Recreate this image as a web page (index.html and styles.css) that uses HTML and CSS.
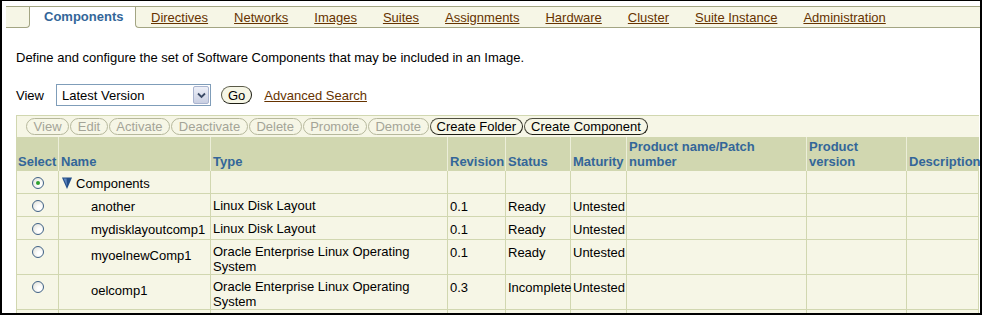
FILE: index.html
```html
<!DOCTYPE html>
<html>
<head>
<meta charset="utf-8">
<title>Components</title>
<link rel="stylesheet" href="styles.css">
</head>
<body>
<div class="frame">
  <div class="tabs">
    <div class="tab-lead"></div>
    <div class="tab-active">Components</div>
    <div class="tab-rest">
      <a class="link">Directives</a>
      <a class="link">Networks</a>
      <a class="link">Images</a>
      <a class="link">Suites</a>
      <a class="link">Assignments</a>
      <a class="link">Hardware</a>
      <a class="link">Cluster</a>
      <a class="link">Suite Instance</a>
      <a class="link">Administration</a>
    </div>
  </div>

  <div class="content">
    <p class="desc">Define and configure the set of Software Components that may be included in an Image.</p>

    <div class="view-row">
      <span class="view-label">View</span>
      <div class="select">
        <span class="select-text">Latest Version</span>
        <span class="select-btn">
          <svg width="9" height="7" viewBox="0 0 9 7"><polyline points="1,1.5 4.5,5 8,1.5" fill="none" stroke="#3b4a66" stroke-width="1.8"/></svg>
        </span>
      </div>
      <span class="btn go">Go</span>
      <a class="link adv">Advanced Search</a>
    </div>

    <div class="toolbar">
      <span class="btn tb off">View</span>
      <span class="btn tb off">Edit</span>
      <span class="btn tb off">Activate</span>
      <span class="btn tb off">Deactivate</span>
      <span class="btn tb off">Delete</span>
      <span class="btn tb off">Promote</span>
      <span class="btn tb off">Demote</span>
      <span class="btn tb">Create Folder</span>
      <span class="btn tb">Create Component</span>
    </div>

    <table class="grid">
      <colgroup>
        <col class="c-select"><col class="c-name"><col class="c-type"><col class="c-rev"><col class="c-status"><col class="c-mat"><col class="c-prod"><col class="c-pver"><col class="c-desc">
      </colgroup>
      <thead>
        <tr>
          <th class="th-select">Select</th>
          <th>Name</th>
          <th>Type</th>
          <th>Revision</th>
          <th>Status</th>
          <th>Maturity</th>
          <th>Product name/Patch number</th>
          <th>Product version</th>
          <th class="last">Description</th>
        </tr>
      </thead>
      <tbody>
        <tr>
          <td><span class="radio on"></span></td>
          <td class="tree"><svg class="tri" width="10" height="12" viewBox="0 0 10 12"><polygon points="0,0.5 10,0.5 5,12" fill="#244f8a"/><polygon points="1.5,1.5 4.5,1.5 5,9" fill="#5f86bf"/></svg>Components</td>
          <td class="type"></td><td></td><td></td><td></td><td></td><td></td><td class="last"></td>
        </tr>
        <tr>
          <td><span class="radio"></span></td>
          <td class="indent">another</td>
          <td class="type">Linux Disk Layout</td>
          <td>0.1</td><td>Ready</td><td>Untested</td><td></td><td></td><td class="last"></td>
        </tr>
        <tr>
          <td><span class="radio"></span></td>
          <td class="indent">mydisklayoutcomp1</td>
          <td class="type">Linux Disk Layout</td>
          <td>0.1</td><td>Ready</td><td>Untested</td><td></td><td></td><td class="last"></td>
        </tr>
        <tr>
          <td><span class="radio"></span></td>
          <td class="indent mid">myoelnewComp1</td>
          <td class="type">Oracle Enterprise Linux Operating System</td>
          <td>0.1</td><td>Ready</td><td>Untested</td><td></td><td></td><td class="last"></td>
        </tr>
        <tr>
          <td><span class="radio"></span></td>
          <td class="indent mid">oelcomp1</td>
          <td class="type">Oracle Enterprise Linux Operating System</td>
          <td>0.3</td><td>Incomplete</td><td>Untested</td><td></td><td></td><td class="last"></td>
        </tr>
        <tr>
          <td><span class="radio"></span></td>
          <td class="indent">&nbsp;</td>
          <td class="type"></td><td></td><td></td><td></td><td></td><td></td><td class="last"></td>
        </tr>
      </tbody>
    </table>
  </div>
</div>
</body>
</html>
```

FILE: styles.css
```css
html, body {
  margin: 0;
  padding: 0;
  background: #ffffff;
}

body {
  font-family: "Liberation Sans", Arial, sans-serif;
  color: #000;
}

.frame {
  width: 982px;
  height: 315px;
  box-sizing: border-box;
  border: 2px solid #000;
  border-top-width: 1px;
  overflow: hidden;
  background: #fff;
}

/* ---------- tabs ---------- */
.tabs {
  display: flex;
  height: 22px;
  margin: 5px 0 0 4px;
  box-sizing: border-box;
  border-top: 1px solid #a3a583;
}

.tab-lead {
  width: 23px;
  background: #f6f6e6;
  border-right: 1px solid #a3a583;
  border-bottom: 1px solid #a3a583;
  border-bottom-right-radius: 4px;
}

.tab-active {
  width: 91px;
  padding-left: 14px;
  background: #fff;
  color: #336699;
  font-weight: bold;
  font-size: 13px;
  line-height: 20px;
}

.tab-rest {
  flex: 1;
  display: flex;
  align-items: center;
  gap: 26px;
  padding-left: 15px;
  background: #f6f6e6;
  border-left: 1px solid #a3a583;
  border-bottom: 1px solid #a3a583;
  border-bottom-left-radius: 4px;
  font-size: 13px;
}

.link {
  color: #663300;
  text-decoration: underline;
  font-size: 13px;
}

/* ---------- content ---------- */
.content {
  padding-left: 14px;
}

.desc {
  margin: 22px 0 0;
  font-size: 13px;
  line-height: 15px;
}

.view-row {
  display: flex;
  align-items: center;
  height: 22px;
  margin-top: 19px;
  font-size: 13px;
}

.view-label {
  width: 40px;
}

.select {
  width: 155px;
  height: 22px;
  box-sizing: border-box;
  border: 1px solid #7f9db9;
  background: #fff;
  display: flex;
  align-items: center;
  justify-content: space-between;
  padding: 0 1px 0 5px;
}

.select-text {
  font-size: 13px;
}

.select-btn {
  width: 16px;
  height: 18px;
  box-sizing: border-box;
  border: 1px solid #a9b4cf;
  border-radius: 2px;
  background: linear-gradient(#eef0f8, #c9cfe2);
  display: flex;
  align-items: center;
  justify-content: center;
}

.btn {
  display: inline-flex;
  align-items: center;
  box-sizing: border-box;
  border-radius: 9px;
  background: #f6f6e6;
  white-space: nowrap;
}

.go {
  height: 18px;
  margin-left: 10px;
  padding: 0 6px;
  border: 1px solid #5a5a48;
  border-right-color: #1e1e14;
  border-bottom-color: #1e1e14;
  font-size: 13px;
}

.adv {
  margin-left: 12px;
}

/* ---------- toolbar ---------- */
.toolbar {
  width: 963px;
  box-sizing: border-box;
  margin-top: 9px;
  padding: 2px 0 2px 9px;
  border-top: 1px solid #d1d7b0;
  border-left: 1px solid #d1d7b0;
  background: #f6f6e6;
  display: flex;
  gap: 1px;
}

.tb {
  height: 17px;
  padding: 0 6px;
  font-size: 13px;
  border: 1px solid #4f4f40;
  border-right-color: #1e1e14;
  border-bottom-color: #1e1e14;
}

.tb.off {
  padding: 0 6.6px;
  color: #a4a497;
  border-color: #b6b89c;
}

/* ---------- grid ---------- */
.grid {
  width: 963px;
  table-layout: fixed;
  border-collapse: separate;
  border-spacing: 0;
  font-size: 13px;
}

.c-select { width: 42px; }
.c-name { width: 152px; }
.c-type { width: 237px; }
.c-rev { width: 58px; }
.c-status { width: 65px; }
.c-mat { width: 56px; }
.c-prod { width: 180px; }
.c-pver { width: 100px; }
.c-desc { width: 73px; }

.grid th {
  background: #d1d7b0;
  color: #336699;
  font-weight: bold;
  font-size: 13px;
  line-height: 15px;
  text-align: left;
  vertical-align: bottom;
  padding: 2px 1px 2px 2px;
  border-left: 1px solid #eceed9;
  white-space: normal;
}

.grid th.th-select {
  padding-left: 1px;
  border-left: 1px solid #d1d7b0;
}

.grid td {
  background: #f6f6e6;
  vertical-align: top;
  line-height: 16px;
  padding: 5px 1px 1px 2px;
  border-left: 1px solid #d1d7b0;
  border-bottom: 1px solid #d1d7b0;
  white-space: nowrap;
}

.grid td.last,
.grid th.last {
  border-right: 1px solid #d1d7b0;
}

.grid td.type {
  line-height: 15px;
  padding-top: 4px;
  padding-bottom: 0;
  white-space: normal;
}

.grid td.indent {
  padding-left: 32px;
}

.grid td.mid {
  padding-top: 8px;
}

.grid td.tree {
  padding-left: 3px;
}

.tri {
  vertical-align: -1px;
  margin-right: 4px;
}

.radio {
  display: block;
  width: 12px;
  height: 12px;
  margin: 1px auto 0;
  box-sizing: border-box;
  border: 1px solid #3f6186;
  border-radius: 50%;
  background: radial-gradient(circle at 65% 65%, #ffffff 20%, #dcdcd2 100%);
  position: relative;
}

.radio.on::after {
  content: "";
  position: absolute;
  left: 3px;
  top: 3px;
  width: 4px;
  height: 4px;
  border-radius: 50%;
  background: #2fa12f;
}
```
